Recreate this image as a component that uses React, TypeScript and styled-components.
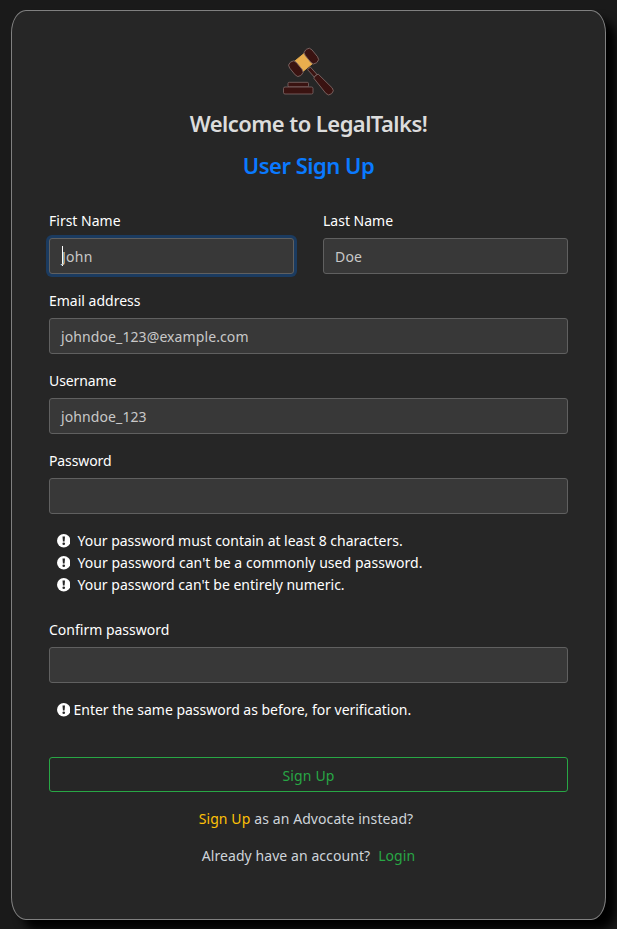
import React from "react";
import styled, { createGlobalStyle } from "styled-components";

const GlobalStyle = createGlobalStyle`
  * { box-sizing: border-box; }
  body {
    margin: 0;
    background: #1a1a1a;
    color: #fff;
    font: 14px/22px "Noto Sans", "Open Sans", sans-serif;
    overflow: hidden;
  }
`;

const Card = styled.main`
  width: 595px;
  height: 910px;
  margin: 10px 11px 9px;
  padding: 35px 37px 0;
  background: #262626;
  border: 1px solid #808080;
  border-radius: 2.5%;
  box-shadow: 10px 10px 10px #000;
`;

const Header = styled.header`
  display: flex;
  flex-direction: column;
  align-items: center;
`;

const Logo = styled.svg`
  width: 54px;
  height: 50px;
  margin-left: -1px;
`;

const Title = styled.h1<{ $accent?: boolean; $track: number }>`
  margin: 12px 0 0;
  font-size: 22px;
  line-height: 30px;
  font-weight: 600;
  white-space: nowrap;
  color: ${(p) => (p.$accent ? "#0a7aff" : "#dcdcdc")};
  letter-spacing: ${(p) => p.$track}px;
`;

const Form = styled.form`
  margin-top: 30px;
`;

const Row = styled.div`
  display: grid;
  grid-template-columns: 1fr 1fr;
  gap: 29px;
`;

const Field = styled.div`
  display: flex;
  flex-direction: column;
  margin-bottom: 14px;
`;

const Label = styled.label<{ $track?: number }>`
  height: 22px;
  margin-bottom: 6px;
  letter-spacing: ${(p) => p.$track ?? 0}px;
`;

const Input = styled.div<{ $focused?: boolean; $track?: number }>`
  display: flex;
  align-items: center;
  height: 36px;
  margin-bottom: 2px;
  padding: 1px 11px 0;
  background: #383838;
  border: 1px solid #606060;
  border-radius: 3px;
  color: #c8c8c8;
  letter-spacing: ${(p) => p.$track ?? 0}px;
  box-shadow: ${(p) => (p.$focused ? "0 0 0 3px #1b3b60" : "none")};
`;

const Caret = styled.span`
  width: 1px;
  height: 20px;
  margin: -2px -1px 0 1px;
  background: #fff;
`;

const Hints = styled.ul<{ $gap: number }>`
  list-style: none;
  margin: 0 0 ${(p) => p.$gap}px;
  padding: 0 0 0 7.5px;
`;

const Hint = styled.li<{ $gap: number; $track: number }>`
  display: flex;
  align-items: center;
  gap: ${(p) => p.$gap}px;
  height: 22px;
  white-space: nowrap;
  letter-spacing: ${(p) => p.$track}px;
`;

const HintIcon = styled.svg`
  width: 13.5px;
  height: 13.5px;
  flex: none;
`;

const Submit = styled.button`
  display: block;
  width: 100%;
  height: 35px;
  padding: 2px 0 0;
  background: transparent;
  border: 1px solid #28a745;
  border-radius: 3px;
  color: #28a745;
  font: inherit;
  letter-spacing: 0.15px;
`;

const Note = styled.p<{ $top: number; $shift: number; $track: number }>`
  display: flex;
  justify-content: center;
  gap: ${(p) => (p.$shift ? 4 : 8)}px;
  margin: ${(p) => p.$top}px ${(p) => p.$shift}px 0 0;
  color: #ced4da;
  white-space: nowrap;
  letter-spacing: ${(p) => p.$track}px;
`;

const Link = styled.a<{ $color: string }>`
  color: ${(p) => p.$color};
`;

const Gavel = () => (
  <Logo viewBox="0 0 54 50" fill="#3a1311" stroke="#806b69" strokeWidth="0.8">
    <rect x="7" y="36.3" width="20.5" height="4.7" rx="1.2" />
    <rect x="2.5" y="41" width="29.5" height="7" rx="1.5" />
    <g transform="translate(22.6 16.4) rotate(48)">
      <path d="M8 -1.9h10v3.8H8z" />
      <path d="M18.5 -3 Q17 0 18.5 3 L38 4.2 Q42 4.2 42 0 Q42 -4.2 38 -4.2 Z" />
    </g>
    <g transform="translate(22.6 16.4) rotate(-39)">
      <rect x="-7" y="-6.6" width="14" height="13.2" fill="#e9ae4e" stroke="#e9ae4e" />
      <rect x="-14.4" y="-8.4" width="8.8" height="16.8" rx="4" />
      <rect x="5.6" y="-8.4" width="8.8" height="16.8" rx="4" />
    </g>
  </Logo>
);

const Alert = () => (
  <HintIcon viewBox="0 0 13 13">
    <circle cx="6.5" cy="6.5" r="6.5" fill="#fff" />
    <path d="M5.3 2.5h2.4l-.4 4.8H5.7z" fill="#262626" />
    <circle cx="6.5" cy="9.4" r="1.25" fill="#262626" />
  </HintIcon>
);

export default function App() {
  return (
    <>
      <GlobalStyle />
      <Card>
        <Header>
          <Gavel />
          <Title $track={-0.55}>Welcome to LegalTalks!</Title>
          <Title $accent $track={-0.5}>User Sign Up</Title>
        </Header>
        <Form>
          <Row>
            <Field>
              <Label>First Name</Label>
              <Input $focused $track={0.25}><Caret />John</Input>
            </Field>
            <Field>
              <Label>Last Name</Label>
              <Input $track={0.2}>Doe</Input>
            </Field>
          </Row>
          <Field>
            <Label>Email address</Label>
            <Input $track={0.1}>johndoe_123@example.com</Input>
          </Field>
          <Field>
            <Label $track={-0.1}>Username</Label>
            <Input $track={0.1}>johndoe_123</Input>
          </Field>
          <Field>
            <Label $track={-0.1}>Password</Label>
            <Input />
          </Field>
          <Hints $gap={23}>
            <Hint $gap={7.5} $track={-0.02}><Alert />Your password must contain at least 8 characters.</Hint>
            <Hint $gap={7.5} $track={0.04}><Alert />Your password can't be a commonly used password.</Hint>
            <Hint $gap={7.5} $track={0}><Alert />Your password can't be entirely numeric.</Hint>
          </Hints>
          <Field>
            <Label>Confirm password</Label>
            <Input />
          </Field>
          <Hints $gap={36}>
            <Hint $gap={3.5} $track={-0.02}><Alert />Enter the same password as before, for verification.</Hint>
          </Hints>
          <Submit type="button">Sign Up</Submit>
          <Note $top={16} $shift={5} $track={0.08}>
            <Link $color="#ffc107">Sign Up</Link>
            <span>as an Advocate instead?</span>
          </Note>
          <Note $top={15} $shift={0} $track={0.07}>
            <span>Already have an account?</span>
            <Link $color="#28a745">Login</Link>
          </Note>
        </Form>
      </Card>
    </>
  );
}
